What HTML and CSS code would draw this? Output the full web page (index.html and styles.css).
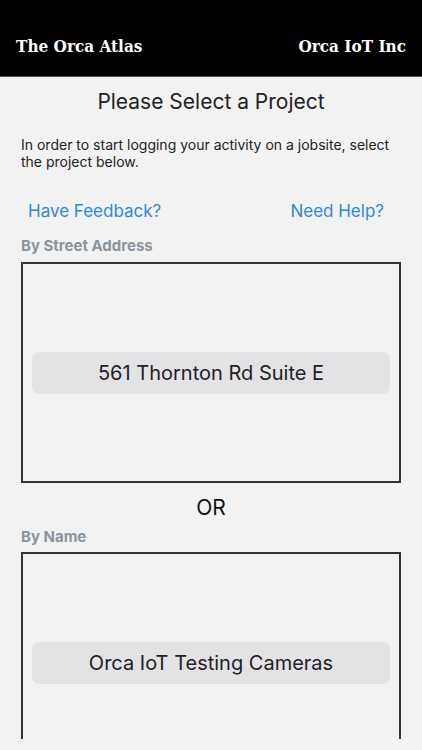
FILE: index.html
```html
<!DOCTYPE html>
<html lang="en">
<head>
    <meta charset="UTF-8">
    <meta name="viewport" content="width=device-width, initial-scale=1.0">
    <title>The Orca Atlas</title>
    <link rel="stylesheet" href="styles.css">
</head>
<body>
    <div class="screen">
        <header class="top-bar">
            <span class="brand">The Orca Atlas</span>
            <span class="brand">Orca IoT Inc</span>
        </header>

        <main class="content">
            <h1>Please Select a Project</h1>
            <p class="intro">In order to start logging your activity on a jobsite, select the project below.</p>

            <div class="links">
                <a href="#">Have Feedback?</a>
                <a href="#">Need Help?</a>
            </div>

            <h2 class="section-label">By Street Address</h2>
            <div class="picker">
                <button class="project-btn">561 Thornton Rd Suite E</button>
            </div>

            <div class="or">OR</div>

            <h2 class="section-label after-or">By Name</h2>
            <div class="picker">
                <button class="project-btn">Orca IoT Testing Cameras</button>
            </div>
        </main>
    </div>
</body>
</html>
```

FILE: styles.css
```css
html, body {
    margin: 0;
    padding: 0;
    background-color: #f2f2f2;
}
body {
    font-family: Inter, "Liberation Sans", Arial, sans-serif;
    color: #222;
}
.screen {
    height: 739px;
    overflow: hidden;
}
.top-bar {
    display: flex;
    justify-content: space-between;
    align-items: center;
    height: 77px;
    padding: 16px 16px 0 16px;
    box-sizing: border-box;
    background-color: #000;
    border-bottom: 1px solid #555;
}
.brand {
    font-family: "DejaVu Serif", serif;
    font-weight: bold;
    font-size: 17px;
    font-stretch: condensed;
    color: #fff;
}
.content {
    padding: 0 21px;
}
h1 {
    margin: 13px 0 0 0;
    font-size: 21px;
    line-height: 24px;
    font-weight: normal;
    text-align: center;
    color: #222;
}
.intro {
    margin: 22px 0 0 0;
    font-size: 14px;
    line-height: 17px;
    color: #222;
}
.links {
    display: flex;
    justify-content: space-between;
    padding: 0 17px 0 7px;
    margin-top: 30px;
    line-height: 22px;
}
.links a {
    font-size: 17px;
    color: #2e89d6;
    text-decoration: none;
}
.section-label {
    margin: 15px 0 7px 0;
    font-size: 15px;
    line-height: 18px;
    font-weight: bold;
    color: #8b949d;
}
.section-label.after-or {
    margin-top: 7px;
    margin-bottom: 6px;
}
.picker {
    height: 221px;
    border: 2px solid #333;
    box-sizing: border-box;
    display: flex;
    align-items: center;
    padding: 0 9px;
}
.project-btn {
    flex: 1;
    height: 42px;
    border: none;
    border-radius: 7px;
    background-color: #e3e3e5;
    font-family: Inter, "Liberation Sans", Arial, sans-serif;
    font-size: 20px;
    color: #222;
}
.or {
    margin-top: 12px;
    font-size: 21px;
    line-height: 26px;
    text-align: center;
    color: #111;
}
```
